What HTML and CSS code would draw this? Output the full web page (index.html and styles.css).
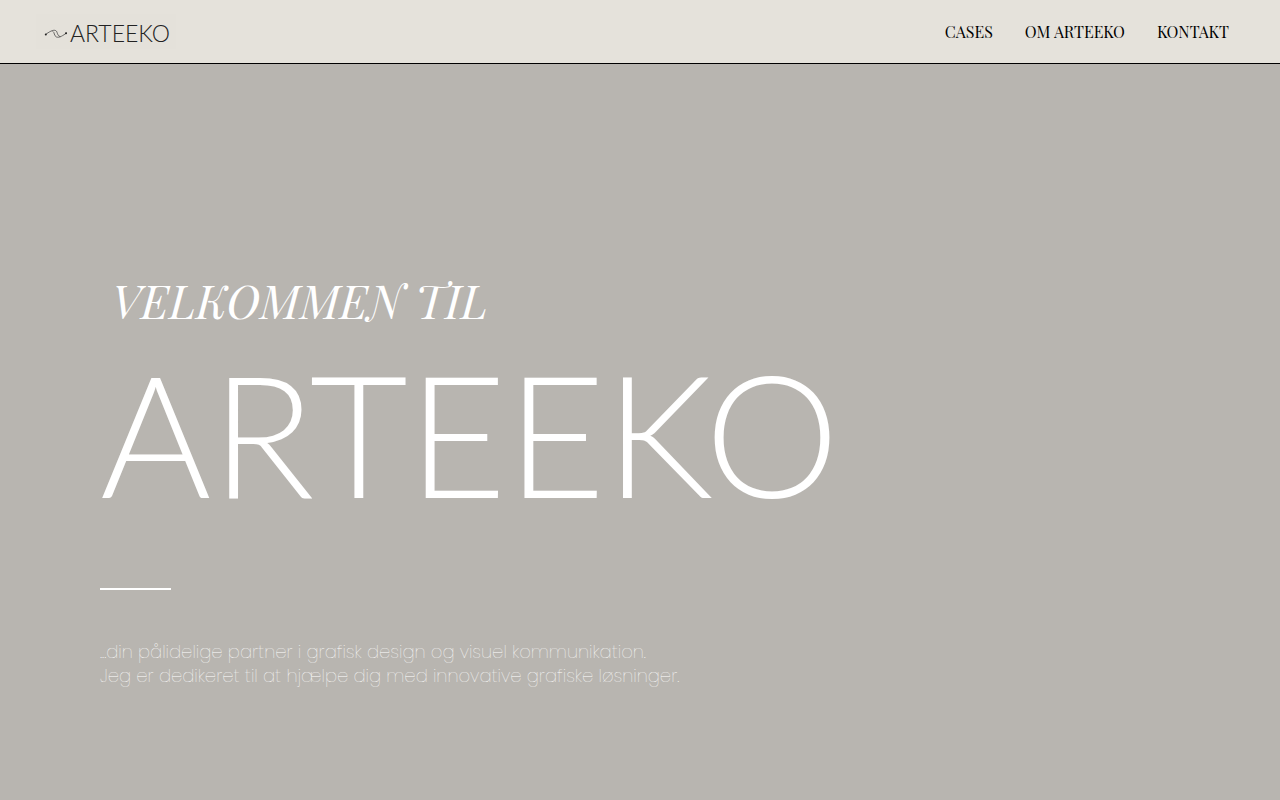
FILE: index.html
```html
<!DOCTYPE html>
<html lang="da">
<head>
<meta charset="utf-8">
<meta name="viewport" content="width=device-width, initial-scale=1">
<title>Arteeko</title>
<link rel="stylesheet" href="styles.css">
</head>
<body>
<header class="site-header">
  <a class="brand" href="#">
    <svg class="brand-mark" viewBox="0 0 24 12" aria-hidden="true">
      <path d="M1.500 7.500C5 5 9 2.500 11.500 3.500C14 4.500 12.500 8.500 16 9.500" stroke-width="0.7"/>
      <path d="M9 4.500C11 5.500 9.500 8.500 12.500 10C15.500 11 19 8.500 22.500 6" stroke-width="0.7"/>
      <circle cx="1.800" cy="7.500" r="1"/>
      <circle cx="22" cy="6.200" r="1"/>
    </svg>
    <span class="brand-name">ARTEEKO</span>
  </a>
  <nav class="site-nav">
    <a href="#cases">CASES</a>
    <a href="#om">OM ARTEEKO</a>
    <a href="#kontakt">KONTAKT</a>
  </nav>
</header>
<main class="hero">
  <p class="hero-kicker">VELKOMMEN TIL</p>
  <h1 class="hero-title">ARTEEKO</h1>
  <hr class="hero-rule">
  <p class="hero-text">...din pålidelige partner i grafisk design og visuel kommunikation.<br>Jeg er dedikeret til at hjælpe dig med innovative grafiske løsninger.</p>
</main>
</body>
</html>
```

FILE: styles.css
```css
* { box-sizing: border-box; }
body {
  margin: 0;
  min-height: 100vh;
  display: flex;
  flex-direction: column;
  background: #b8b5b0;
}
.site-header {
  display: flex;
  align-items: center;
  justify-content: space-between;
  min-height: 64px;
  padding: 0 51px 0 36px;
  background: #e5e2db;
  border-bottom: 1px solid #000;
}
.brand {
  display: flex;
  align-items: center;
  gap: 2px;
  padding: 5px 6px 2px 8px;
  background: #e4e1da;
  color: #222;
  text-decoration: none;
}
.brand-mark {
  width: 24px;
  height: 12px;
  fill: none;
  stroke: #333;
  stroke-linecap: round;
}
.brand-mark circle { fill: #222; stroke: none; }
.brand-name {
  font: 300 23px/28px Lato, "Open Sans", sans-serif;
}
.site-nav { display: flex; gap: 32px; }
.site-nav a {
  font: 16px/24px "Playfair Display", "Liberation Serif", serif;
  color: #000;
  text-decoration: none;
}
.hero {
  flex: 1;
  display: flex;
  flex-direction: column;
  justify-content: flex-end;
  padding: 64px 100px 112px;
  color: #fff;
}
.hero-kicker {
  margin: 0;
  padding-left: 12px;
  font: italic 46px/64px "Playfair Display", "Liberation Serif", serif;
}
.hero-title {
  margin: 0;
  font: 300 170px/200px Lato, "Open Sans", sans-serif;
}
.hero-rule {
  width: 71px;
  height: 2px;
  margin: 56px 0 50px;
  border: 0;
  background: #fff;
}
.hero-text {
  margin: 0;
  font: 200 18px/24px Poppins, Inter, sans-serif;
  color: #fff;
}
```
